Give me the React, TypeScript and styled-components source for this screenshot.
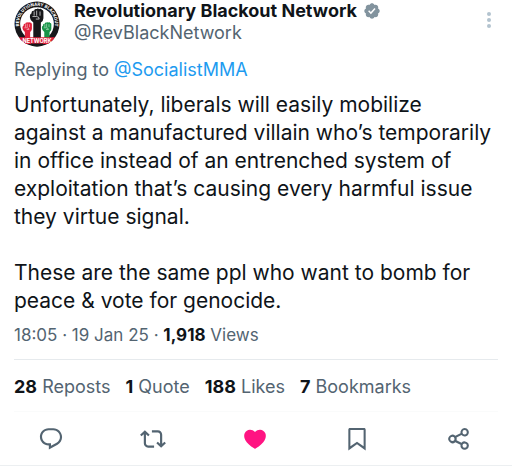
import React from "react";
import styled, { createGlobalStyle } from "styled-components";

const GlobalStyle = createGlobalStyle`
  body {
    margin: 0;
    background: #fff;
    color: #0f1419;
    font-family: Inter, "Liberation Sans", sans-serif;
  }
`;

const Post = styled.article`
  display: flex;
  flex-direction: column;
`;

const Section = styled.div`
  padding: 0 14px;
`;

const Header = styled.header`
  display: flex;
  align-items: flex-start;
  gap: 14px;
  padding: 0 14px 10px;
`;

const Avatar = styled.svg`
  flex: none;
  width: 46px;
  height: 46px;
  margin-top: 1px;
`;

const Author = styled.div`
  flex: 1;
  min-width: 0;
`;

const Name = styled.div`
  display: flex;
  align-items: center;
  gap: 6px;
  font-size: 18px;
  font-weight: 700;
  line-height: 22px;
  white-space: nowrap;
`;

const Badge = styled.svg`
  flex: none;
  width: 18px;
  height: 18px;
  fill: #82939e;
`;

const Handle = styled.div`
  color: #536471;
  font-size: 18px;
  line-height: 22px;
`;

const MoreButton = styled.button`
  display: flex;
  flex-direction: column;
  align-items: center;
  gap: 2px;
  width: 18px;
  padding: 12px 0 0;
  border: 0;
  background: none;
`;

const Dot = styled.span`
  width: 4px;
  height: 4px;
  border-radius: 2px;
  background: #b3c3cf;
`;

const Replying = styled.p`
  margin: 0;
  color: #536471;
  font-size: 18px;
  line-height: 26px;
`;

const Mention = styled.a`
  color: #1d9bf0;
  text-decoration: none;
`;

const Body = styled.p`
  margin: 8px 0 0;
  font-size: 21px;
  line-height: 28px;
  white-space: pre;
`;

const Meta = styled.p`
  margin: 8px 0 0;
  color: #536471;
  font-size: 17px;
  line-height: 24px;
`;

const Strong = styled.strong`
  color: #0f1419;
  font-weight: 700;
`;

const Stats = styled.div`
  display: flex;
  gap: 15px;
  margin: 12px 14px 0;
  padding: 15px 0 12px;
  border-top: 1px solid #e6eaed;
  border-bottom: 1px solid #fafbfb;
  color: #536471;
  font-size: 18px;
  line-height: 24px;
  white-space: nowrap;
`;

const Actions = styled.div`
  display: grid;
  grid-template-columns: repeat(5, 1fr);
  height: 53px;
  padding-right: 2px;
  border-bottom: 1px solid #eceff1;
`;

const Action = styled.button`
  display: flex;
  align-items: center;
  justify-content: center;
  padding: 0;
  border: 0;
  background: none;
`;

const Icon = styled.svg<{ $color?: string }>`
  width: 26px;
  height: 26px;
  fill: ${(p) => p.$color ?? "#536471"};
`;

const stats = [
  { count: "28", label: "Reposts" },
  { count: "1", label: "Quote" },
  { count: "188", label: "Likes" },
  { count: "7", label: "Bookmarks" },
];

const body = [
  "Unfortunately, liberals will easily mobilize",
  "against a manufactured villain who’s temporarily",
  "in office instead of an entrenched system of",
  "exploitation that’s causing every harmful issue",
  "they virtue signal.",
  "",
  "These are the same ppl who want to bomb for",
  "peace & vote for genocide.",
].join("\n");

const actions = [
  {
    label: "Reply",
    path: "M1.751 10c0-4.42 3.584-8 8.005-8h4.366c4.49 0 8.129 3.64 8.129 8.13 0 2.96-1.607 5.68-4.196 7.11l-8.054 4.46v-3.69h-.067c-4.49.1-8.183-3.51-8.183-8.01zm8.005-6c-3.317 0-6.005 2.69-6.005 6 0 3.37 2.77 6.08 6.138 6.01l.351-.01h1.761v2.3l5.087-2.81c1.951-1.08 3.163-3.13 3.163-5.36 0-3.39-2.744-6.13-6.129-6.13H9.756z",
  },
  {
    label: "Repost",
    path: "M4.5 3.88l4.432 4.14-1.364 1.46L5.5 7.55V16c0 1.1.896 2 2 2H13v2H7.5c-2.209 0-4-1.79-4-4V7.55L1.432 9.48.068 8.02 4.5 3.88zM16.5 6H11V4h5.5c2.209 0 4 1.79 4 4v8.45l2.068-1.93 1.364 1.46-4.432 4.14-4.432-4.14 1.364-1.46 2.068 1.93V8c0-1.1-.896-2-2-2z",
  },
  {
    label: "Like",
    color: "#ff1482",
    path: "M20.884 13.19c-1.351 2.48-4.001 5.12-8.379 7.67l-.503.3-.504-.3c-4.379-2.55-7.029-5.19-8.382-7.67-1.36-2.5-1.41-4.86-.514-6.67.887-1.79 2.647-2.91 4.601-3.01 1.651-.09 3.368.56 4.798 2.01 1.429-1.45 3.146-2.1 4.796-2.01 1.954.1 3.714 1.22 4.601 3.01.896 1.81.846 4.17-.514 6.67z",
  },
  {
    label: "Bookmark",
    path: "M4 3.4C4 2.5 4.6 1.9 5.5 1.9h13c.9 0 1.5.6 1.5 1.5v19.2l-8-5.7-8 5.7V3.4zm1.9.4v15l6.1-4.3 6.1 4.3v-15H5.9z",
  },
  {
    label: "Share",
    path: "M17.2 1.9a3.9 3.9 0 1 1-2.9 6.5l-4.6 2.3a4 4 0 0 1 0 2.5l4.6 2.3a3.9 3.9 0 1 1-.9 1.8l-4.8-2.4a3.9 3.9 0 1 1 0-5.9l4.8-2.4a3.9 3.9 0 0 1 3.8-4.7zm0 1.9a2 2 0 1 0 0 4 2 2 0 0 0 0-4zM5.9 9.9a2 2 0 1 0 0 4 2 2 0 0 0 0-4zm11.3 6.2a2 2 0 1 0 0 4 2 2 0 0 0 0-4z",
  },
];

const fistPath =
  "M-7-9q0-2 2-2h1q0-2 2-2h1q1-1 3 0 3-1 3 1 2 0 2 2v8q0 3-3 5v19h-9V3q-4-3-4-6v-2q0-2 2-3z";
const knucklePath = "M-4-10v5M-1-11v6M3-10v5M-6-4h5q3 0 3 3h-4";

function Fist({ x, y, scale, color }: { x: number; y: number; scale: number; color: string }) {
  return (
    <g transform={`translate(${x} ${y}) scale(${scale})`}>
      <path d={fistPath} fill={color} />
      <path d={knucklePath} fill="none" stroke="#fff" strokeWidth="0.8" />
    </g>
  );
}

function NetworkLogo() {
  return (
    <Avatar viewBox="0 0 90 90" role="img" aria-label="Revolutionary Blackout Network">
      <defs>
        <clipPath id="disc">
          <circle cx="45" cy="45" r="44" />
        </clipPath>
        <path id="ring" d="M16 64A35 35 0 1 1 74 64" />
      </defs>
      <circle cx="45" cy="45" r="44" fill="#17171a" />
      <circle cx="45" cy="45" r="33" fill="#fff" />
      <g clipPath="url(#disc)">
        <Fist x={27} y={57} scale={1.15} color="#e0203a" />
        <Fist x={65} y={57} scale={1.15} color="#169447" />
        <Fist x={46} y={37} scale={1.65} color="#17171a" />
        <path d="M9 71h73l-6 13H15z" fill="#e0203a" />
        <path d="M33 83h24l-3 7H36z" fill="#17171a" />
      </g>
      <text fill="#fff" fontSize="9" fontWeight="700" fontFamily="Roboto, sans-serif">
        <textPath href="#ring" startOffset="50%" textAnchor="middle">
          REVOLUTIONARY BLACKOUT
        </textPath>
      </text>
      <text x="45" y="82" fill="#fff" fontSize="11" fontWeight="700" textAnchor="middle">
        NETWORK
      </text>
    </Avatar>
  );
}

export default function App() {
  return (
    <>
      <GlobalStyle />
      <Post>
        <Header>
          <NetworkLogo />
          <Author>
            <Name>
              Revolutionary Blackout Network
              <Badge viewBox="0 0 24 24" role="img" aria-label="Verified">
                <path d="M22.25 12c0-1.43-.88-2.67-2.19-3.34.46-1.39.2-2.9-.81-3.91s-2.52-1.27-3.91-.81c-.66-1.31-1.91-2.19-3.34-2.19s-2.67.88-3.33 2.19c-1.4-.46-2.91-.2-3.92.81s-1.26 2.52-.8 3.91c-1.31.67-2.2 1.91-2.2 3.34s.89 2.67 2.2 3.34c-.46 1.39-.21 2.9.8 3.91s2.52 1.26 3.91.81c.67 1.31 1.91 2.19 3.34 2.19s2.68-.88 3.34-2.19c1.39.45 2.9.2 3.91-.81s1.27-2.52.81-3.91c1.31-.67 2.19-1.91 2.19-3.34zm-11.71 4.2L6.8 12.46l1.41-1.42 2.26 2.26 4.8-5.23 1.47 1.36-6.2 6.77z" />
              </Badge>
            </Name>
            <Handle>@RevBlackNetwork</Handle>
          </Author>
          <MoreButton type="button" aria-label="More">
            <Dot />
            <Dot />
            <Dot />
          </MoreButton>
        </Header>
        <Section>
          <Replying>
            Replying to <Mention href="#SocialistMMA">@SocialistMMA</Mention>
          </Replying>
          <Body>{body}</Body>
          <Meta>
            18:05 · 19 Jan 25 · <Strong>1,918</Strong> Views
          </Meta>
        </Section>
        <Stats>
          {stats.map((s) => (
            <span key={s.label}>
              <Strong>{s.count}</Strong> {s.label}
            </span>
          ))}
        </Stats>
        <Actions>
          {actions.map((a) => (
            <Action key={a.label} type="button" aria-label={a.label}>
              <Icon viewBox="0 0 24 24" $color={a.color}>
                <path d={a.path} />
              </Icon>
            </Action>
          ))}
        </Actions>
      </Post>
    </>
  );
}
